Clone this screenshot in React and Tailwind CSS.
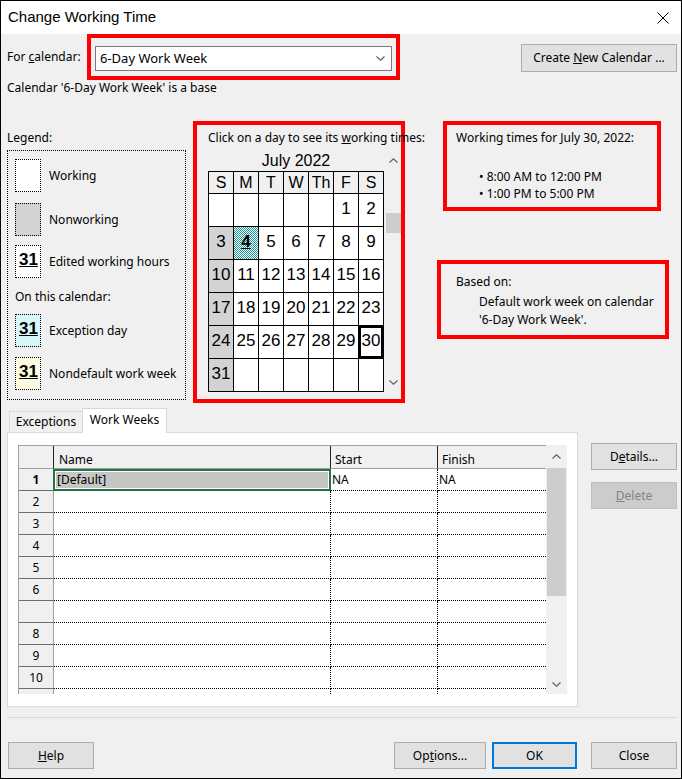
import React from "react";

const weeks = [
  [null, null, null, null, null, 1, 2],
  [3, 4, 5, 6, 7, 8, 9],
  [10, 11, 12, 13, 14, 15, 16],
  [17, 18, 19, 20, 21, 22, 23],
  [24, 25, 26, 27, 28, 29, 30],
  [31, null, null, null, null, null, null],
];

const dayHeads = ["S", "M", "T", "W", "Th", "F", "S"];

const rowLabels = ["1", "2", "3", "4", "5", "6", "", "8", "9", "10"];

const Chevron = ({ up, className }) => (
  <svg width="9" height="5" viewBox="0 0 9 5" className={className}>
    <path
      d={up ? "M0.5 4.5 L4.5 0.8 L8.5 4.5" : "M0.5 0.5 L4.5 4.2 L8.5 0.5"}
      fill="none"
      stroke="#606060"
      strokeWidth="1.2"
    />
  </svg>
);

const Button = ({ children, className = "" }) => (
  <div
    className={`h-[27px] flex items-center justify-center border border-[#adadad] bg-[#e1e1e1] ${className}`}
  >
    {children}
  </div>
);

const LegendItem = ({ box, label, marked, className = "" }) => (
  <div className={`flex items-center h-[33px] ${className}`}>
    <div className={`w-[26px] h-[33px] border border-dotted border-black ${box}`}>
      {marked && (
        <div className="pl-[3px] pt-[5px] text-[17px] leading-none font-bold underline font-['Liberation_Sans',sans-serif]">
          31
        </div>
      )}
    </div>
    <span className="ml-[8px]">{label}</span>
  </div>
);

const dayCell = (d, i, w) => {
  let cls = "bg-white";
  if (d !== null && i === 0) cls = "bg-[#d3d3d3]";
  if (d === 4)
    cls =
      "bg-[repeating-conic-gradient(#1a9a9a_0%_25%,#ffffff_0%_50%)] bg-[length:2px_2px] font-bold underline";
  if (d === 30) cls = "bg-white shadow-[inset_0_0_0_2px_#000]";
  return (
    <div
      key={`${w}-${i}`}
      className={`flex items-center justify-center text-[17px] leading-none pb-[3px] ${cls}`}
    >
      {d}
    </div>
  );
};

export default function App() {
  return (
    <div className="w-[682px] h-[779px] border border-black bg-[#f0f0f0] flex flex-col overflow-hidden font-['Noto_Sans',sans-serif] text-[12px] text-black">
      {/* title bar */}
      <div className="h-[33px] bg-white flex items-center justify-between pl-[7px] pr-[12px] shrink-0">
        <span className="text-[15px] font-['Liberation_Sans',sans-serif]">Change Working Time</span>
        <svg width="12" height="12" viewBox="0 0 12 12">
          <path d="M0.5 0.5 L11.5 11.5 M11.5 0.5 L0.5 11.5" stroke="#000" strokeWidth="1" />
        </svg>
      </div>

      {/* calendar picker row */}
      <div className="flex items-start h-[46px] pl-[6px] pr-[4px] shrink-0">
        <span className="w-[80px] h-[46px] flex items-center">
          For&nbsp;<span className="underline">c</span>alendar:
        </span>
        <div className="w-[313px] h-[46px] border-4 border-[#ff0000] pt-[8px] pl-[4px]">
          <div className="w-[297px] h-[25px] bg-white border border-[#7a7a7a] flex items-center justify-between pl-[4px] pr-[6px]">
            <span className="text-[13px]">6-Day Work Week</span>
            <Chevron />
          </div>
        </div>
        <div className="flex-1" />
        <Button className="w-[156px] h-[28px] mt-[10px]">
          Create&nbsp;<span className="underline">N</span>ew Calendar ...
        </Button>
      </div>

      <div className="h-[16px] leading-[16px] pl-[6px] shrink-0">
        Calendar '6-Day Work Week' is a base
      </div>

      {/* middle section */}
      <div className="flex items-start pl-[6px] mt-[25px] shrink-0">
        {/* legend */}
        <div className="w-[179px] flex flex-col">
          <div className="mt-[9px] h-[16px] leading-[16px]">Legend:</div>
          <div className="mt-[4px] w-[179px] h-[250px] border border-dotted border-black pl-[7px] pt-[8px] flex flex-col">
            <LegendItem box="bg-white" label="Working" />
            <LegendItem box="bg-[#d3d3d3]" label="Nonworking" className="mt-[11px]" />
            <LegendItem box="bg-white" label="Edited working hours" marked className="mt-[9px]" />
            <div className="mt-[11px] h-[16px] leading-[16px]">On this calendar:</div>
            <LegendItem box="bg-[#d6f6fa]" label="Exception day" marked className="mt-[9px]" />
            <LegendItem box="bg-[#fcfbe0]" label="Nondefault work week" marked className="mt-[10px]" />
          </div>
        </div>

        {/* calendar */}
        <div className="ml-[7px] w-[212px] h-[282px] border-4 border-[#ff0000] pl-[11px] pt-[5px] flex flex-col">
          <div className="h-[16px] leading-[16px] whitespace-nowrap">
            Click on a day to see its <span className="underline">w</span>orking times:
          </div>
          <div className="mt-[4px] flex items-start">
            <div className="w-[176px] flex flex-col">
              <div className="h-[21px] flex items-center justify-center text-[16px] font-['Liberation_Sans',sans-serif]">
                July 2022
              </div>
              <div className="grid grid-cols-[repeat(7,24px)] grid-rows-[21px_repeat(6,32px)] gap-px bg-black border border-black font-['Liberation_Sans',sans-serif]">
                {dayHeads.map((h, i) => (
                  <div
                    key={`h-${i}`}
                    className="bg-[#f0f0f0] flex items-center justify-center text-[16px] leading-none"
                  >
                    {h}
                  </div>
                ))}
                {weeks.map((wk, w) => wk.map((d, i) => dayCell(d, i, w)))}
              </div>
            </div>
            <div className="ml-[2px] w-[15px] h-[242px] flex flex-col items-center">
              <div className="h-[20px] flex items-center justify-center">
                <Chevron up />
              </div>
              <div className="mt-[43px] w-[15px] h-[20px] bg-[#cdcdcd]" />
              <div className="flex-1" />
              <div className="h-[20px] flex items-center justify-center">
                <Chevron />
              </div>
            </div>
          </div>
        </div>

        {/* working times */}
        <div className="ml-[32px] flex flex-col">
          <div className="ml-[6px] w-[218px] h-[90px] border-4 border-[#ff0000] pl-[9px] pt-[5px]">
            <div className="h-[16px] leading-[16px]">Working times for July 30, 2022:</div>
            <div className="mt-[22px] ml-[23px] leading-[17px]">
              <div>• 8:00 AM to 12:00 PM</div>
              <div>• 1:00 PM to 5:00 PM</div>
            </div>
          </div>
          <div className="mt-[49px] w-[232px] h-[79px] border-4 border-[#ff0000] pl-[15px] pt-[10px]">
            <div className="h-[16px] leading-[16px]">Based on:</div>
            <div className="mt-[3px] ml-[23px] leading-[18px]">
              <div>Default work week on calendar</div>
              <div>'6-Day Work Week'.</div>
            </div>
          </div>
        </div>
      </div>

      {/* tabs */}
      <div className="mt-[5px] h-[24px] flex items-end pl-[8px] shrink-0">
        <div className="w-[73px] h-[21px] border border-b-0 border-r-0 border-[#d9d9d9] bg-[#f0f0f0] flex items-center justify-center">
          Exceptions
        </div>
        <div className="relative z-10 w-[85px] h-[25px] -mb-px border border-b-0 border-[#d9d9d9] bg-white flex items-center justify-center pb-[3px]">
          Work Weeks
        </div>
      </div>

      <div className="flex items-start pl-[6px] pr-[4px] shrink-0">
        {/* panel */}
        <div className="w-[571px] h-[275px] bg-white border border-[#d9d9d9] pl-[10px] pt-[12px]">
          <div className="flex items-start">
            <div className="w-[528px] border-t border-l border-[#a0a0a0]">
              <div className="grid grid-cols-[35px_277px_107px_108px] grid-rows-[23px_repeat(10,22px)_5px]">
                <div className="bg-[#f0f0f0] border-r border-b border-r-[#222] border-b-[#a0a0a0]" />
                <div className="bg-[#f0f0f0] border-r border-b border-r-[#222] border-b-[#a0a0a0] flex items-end pl-[5px] leading-[16px]">
                  Name
                </div>
                <div className="bg-[#f0f0f0] border-r border-b border-r-[#222] border-b-[#a0a0a0] flex items-end pl-[4px] leading-[16px]">
                  Start
                </div>
                <div className="bg-[#f0f0f0] border-b border-[#a0a0a0] flex items-end pl-[4px] leading-[16px]">
                  Finish
                </div>
                {rowLabels.map((lbl, r) => (
                  <React.Fragment key={`r-${r}`}>
                    <div
                      className={`bg-[#f0f0f0] border-r border-b border-r-[#a0a0a0] border-b-[#6d6d6d] flex items-center justify-center ${
                        r === 0 ? "font-bold" : ""
                      }`}
                    >
                      {lbl}
                    </div>
                    {r === 0 ? (
                      <div className="border-2 border-[#217346] -ml-px p-[1px] bg-white">
                        <div className="h-full bg-[#c6c6c6] flex items-center pl-[1px]">[Default]</div>
                      </div>
                    ) : (
                      <div className="border-r border-b border-dotted border-black" />
                    )}
                    <div className="border-r border-b border-dotted border-black flex items-center pl-[1px]">
                      {r === 0 ? "NA" : ""}
                    </div>
                    <div className="border-b border-dotted border-black flex items-center pl-[1px]">
                      {r === 0 ? "NA" : ""}
                    </div>
                  </React.Fragment>
                ))}
                <div className="bg-[#f0f0f0] border-r border-[#a0a0a0]" />
                <div className="border-r border-dotted border-black" />
                <div className="border-r border-dotted border-black" />
                <div />
              </div>
            </div>
            <div className="w-[21px] h-[249px] bg-[#f0f0f0] flex flex-col items-center">
              <div className="h-[23px] flex items-center justify-center">
                <Chevron up />
              </div>
              <div className="w-[19px] h-[128px] bg-[#cdcdcd]" />
              <div className="flex-1" />
              <div className="h-[20px] flex items-center justify-center">
                <Chevron />
              </div>
            </div>
          </div>
        </div>

        <div className="flex-1" />
        <div className="flex flex-col w-[86px]">
          <Button className="mt-[11px]">
            D<span className="underline">e</span>tails...
          </Button>
          <div className="mt-[12px] h-[27px] flex items-center justify-center border border-[#bfbfbf] bg-[#cccccc] text-[#838383]">
            <span className="underline">D</span>elete
          </div>
        </div>
      </div>

      <div className="mt-[10px] ml-[6px] mr-[4px] h-px bg-[#d9d9d9] shrink-0" />

      <div className="mt-[24px] flex items-start pl-[7px] pr-[4px] shrink-0">
        <Button className="w-[86px]">
          <span className="underline">H</span>elp
        </Button>
        <div className="flex-1" />
        <Button className="w-[92px]">
          Op<span className="underline">t</span>ions...
        </Button>
        <div className="ml-[6px] w-[85px] h-[27px] flex items-center justify-center border-2 border-[#0078d7] bg-[#e1e1e1]">
          OK
        </div>
        <Button className="ml-[14px] w-[86px]">Close</Button>
      </div>
    </div>
  );
}
